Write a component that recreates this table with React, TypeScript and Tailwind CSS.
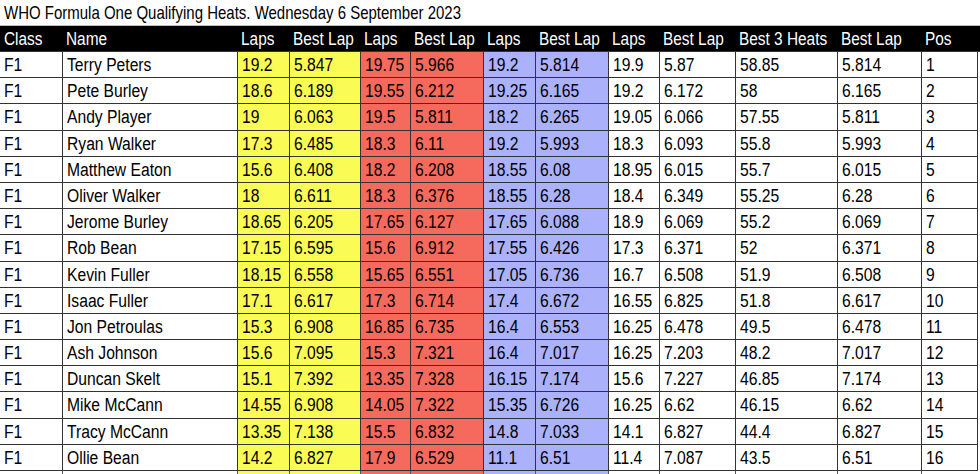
import React from "react";

const rows: string[][] = [
  ["F1", "Terry Peters", "19.2", "5.847", "19.75", "5.966", "19.2", "5.814", "19.9", "5.87", "58.85", "5.814", "1"],
  ["F1", "Pete Burley", "18.6", "6.189", "19.55", "6.212", "19.25", "6.165", "19.2", "6.172", "58", "6.165", "2"],
  ["F1", "Andy Player", "19", "6.063", "19.5", "5.811", "18.2", "6.265", "19.05", "6.066", "57.55", "5.811", "3"],
  ["F1", "Ryan Walker", "17.3", "6.485", "18.3", "6.11", "19.2", "5.993", "18.3", "6.093", "55.8", "5.993", "4"],
  ["F1", "Matthew Eaton", "15.6", "6.408", "18.2", "6.208", "18.55", "6.08", "18.95", "6.015", "55.7", "6.015", "5"],
  ["F1", "Oliver Walker", "18", "6.611", "18.3", "6.376", "18.55", "6.28", "18.4", "6.349", "55.25", "6.28", "6"],
  ["F1", "Jerome Burley", "18.65", "6.205", "17.65", "6.127", "17.65", "6.088", "18.9", "6.069", "55.2", "6.069", "7"],
  ["F1", "Rob Bean", "17.15", "6.595", "15.6", "6.912", "17.55", "6.426", "17.3", "6.371", "52", "6.371", "8"],
  ["F1", "Kevin Fuller", "18.15", "6.558", "15.65", "6.551", "17.05", "6.736", "16.7", "6.508", "51.9", "6.508", "9"],
  ["F1", "Isaac Fuller", "17.1", "6.617", "17.3", "6.714", "17.4", "6.672", "16.55", "6.825", "51.8", "6.617", "10"],
  ["F1", "Jon Petroulas", "15.3", "6.908", "16.85", "6.735", "16.4", "6.553", "16.25", "6.478", "49.5", "6.478", "11"],
  ["F1", "Ash Johnson", "15.6", "7.095", "15.3", "7.321", "16.4", "7.017", "16.25", "7.203", "48.2", "7.017", "12"],
  ["F1", "Duncan Skelt", "15.1", "7.392", "13.35", "7.328", "16.15", "7.174", "15.6", "7.227", "46.85", "7.174", "13"],
  ["F1", "Mike McCann", "14.55", "6.908", "14.05", "7.322", "15.35", "6.726", "16.25", "6.62", "46.15", "6.62", "14"],
  ["F1", "Tracy McCann", "13.35", "7.138", "15.5", "6.832", "14.8", "7.033", "14.1", "6.827", "44.4", "6.827", "15"],
  ["F1", "Ollie Bean", "14.2", "6.827", "17.9", "6.529", "11.1", "6.51", "11.4", "7.087", "43.5", "6.51", "16"],
];

const headers = ["Class", "Name", "Laps", "Best Lap", "Laps", "Best Lap", "Laps", "Best Lap", "Laps", "Best Lap", "Best 3 Heats", "Best Lap", "Pos"];

const bgs = [
  "bg-white", "bg-white",
  "bg-[#fbfb55]", "bg-[#fbfb55]",
  "bg-[#f56a5c]", "bg-[#f56a5c]",
  "bg-[#abb1fb]", "bg-[#abb1fb]",
  "bg-white", "bg-white", "bg-white", "bg-white", "bg-white",
];

const gridCols = "grid grid-cols-[62px_175px_52px_71px_50px_73px_52px_73px_51px_76px_102px_84px_57px]";

export default function App() {
  return (
    <div
      className="w-[980px] h-[474px] overflow-hidden bg-white text-black"
      style={{ fontFamily: '"Liberation Sans", Arial, sans-serif' }}
    >
      <div className="h-[26px] pl-[4px] pt-[1px] text-[18.5px] leading-[24px] border-b border-[#bbb] whitespace-nowrap">
        <span className="inline-block origin-left scale-x-[0.81]">
          WHO Formula One Qualifying Heats. Wednesday 6 September 2023
        </span>
      </div>
      <div className={`${gridCols} h-[26px] bg-black text-white text-[17.5px] leading-[23px] border-b border-[#333]`}>
        {headers.map((h, i) => (
          <div key={i} className="pl-[4px] pt-[2px] whitespace-nowrap">
            <span className="inline-block origin-left scale-x-[0.88]">{h}</span>
          </div>
        ))}
      </div>
      {rows.map((r, ri) => (
        <div key={ri} className={`${gridCols} h-[26.2px] text-[18px] leading-[23px]`}>
          {r.map((c, ci) => (
            <div
              key={ci}
              className={`${bgs[ci]} pl-[4px] pt-[2px] whitespace-nowrap border-b border-[#333] ${ci > 0 ? "border-l" : ""} ${ci === 12 ? "border-r" : ""} border-[#333]`}
            >
              <span className="inline-block origin-left scale-x-[0.87]">{c}</span>
            </div>
          ))}
        </div>
      ))}
      <div className={`${gridCols} h-[26px]`}>
        {headers.map((_, ci) => (
          <div key={ci} className={`${bgs[ci]} ${ci > 0 ? "border-l" : ""} border-[#555]`} />
        ))}
      </div>
    </div>
  );
}
